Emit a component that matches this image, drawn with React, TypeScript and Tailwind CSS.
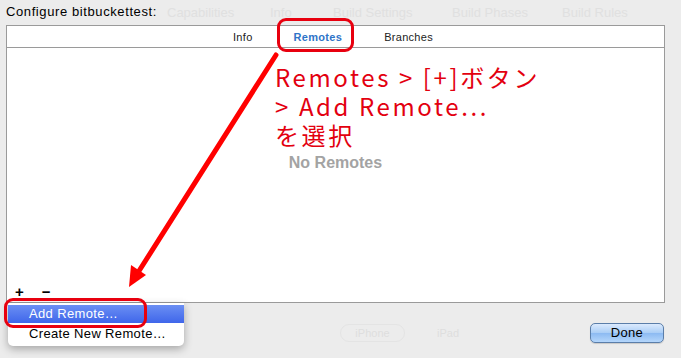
import React from "react";

export default function App() {
  return (
    <div className="relative w-[681px] h-[358px] overflow-hidden bg-[#ececec] font-['Liberation_Sans',Arial,sans-serif] text-black">
      {/* faint background toolbar labels */}
      <div className="absolute left-0 top-[5px] w-full h-[16px] text-[13px] leading-[16px] text-[#e0e0e0]">
        <span className="absolute left-[167px]">Capabilities</span>
        <span className="absolute left-[270px]">Info</span>
        <span className="absolute left-[333px]">Build Settings</span>
        <span className="absolute left-[452px]">Build Phases</span>
        <span className="absolute left-[562px]">Build Rules</span>
      </div>

      <div className="relative flex flex-col">
        <div className="pl-[6px] pt-[4px] text-[13px] leading-[16px] tracking-[0.6px]">Configure bitbuckettest:</div>

        <div className="ml-[6px] mt-[5px] w-[659px] h-[278px] border border-[#9a9a9a] bg-white flex flex-col">
          <div className="h-[22px] border-b border-[#9a9a9a] flex items-center text-[11px] leading-[14px] pl-[226px] tracking-[0.3px]">
            <span className="text-[#222]">Info</span>
            <span className="ml-[41px] font-bold text-[#2f74c8]">Remotes</span>
            <span className="ml-[42px] text-[#222]">Branches</span>
          </div>
          <div className="flex-1 flex flex-col">
            <div className="pt-[105px] text-center text-[16px] leading-[19px] font-bold text-[#a3a3a3]">No Remotes</div>
            <div className="mt-auto mb-[1px] h-[18px] flex items-center pl-[8px] text-[15px] font-bold leading-[18px]">
              <span>+</span>
              <span className="ml-[18px]">−</span>
            </div>
          </div>
        </div>

        <div className="mt-[20px] h-[20px] flex items-center pr-[17px]">
          <div className="ml-[340px] w-[65px] h-[18px] rounded-full border border-[#e4e4e4] text-[11px] leading-[16px] text-center text-[#dedede]">iPhone</div>
          <div className="ml-[32px] text-[11px] text-[#dedede]">iPad</div>
          <div className="ml-auto w-[74px] h-[20px] rounded-[5px] border border-[#5b7ea9] bg-[linear-gradient(#dbeafd,#a9cdf6_50%,#8cbaf2_51%,#b4d6fb)] text-[13px] leading-[18px] text-center tracking-[0.3px] shadow-[0_1px_1px_rgba(0,0,0,0.15)]">
            Done
          </div>
        </div>
      </div>

      {/* popup menu */}
      <div className="absolute left-[8px] top-[303px] w-[176px] h-[43px] bg-white rounded-b-[5px] shadow-[0_3px_8px_rgba(0,0,0,0.3)] text-[13px] leading-[17px] pt-[2px] tracking-[0.35px]">
        <div className="h-[18px] pl-[21px] text-white bg-[linear-gradient(#6b8ff3,#3f66ea)]">Add Remote…</div>
        <div className="h-[18px] pl-[21px] pt-[2px]">Create New Remote…</div>
      </div>

      {/* annotations */}
      <div className="absolute left-[277px] top-[18px] w-[77px] h-[34px] border-[3px] border-[#e8000f] rounded-[9px]" />
      <div className="absolute left-[4px] top-[298px] w-[143px] h-[30px] border-[3px] border-[#e8000f] rounded-[9px]" />

      <svg className="absolute left-0 top-0" width="681" height="358" viewBox="0 0 681 358">
        <line x1="276" y1="55" x2="139" y2="271" stroke="#ff0000" strokeWidth="5" strokeLinecap="round" />
        <polygon points="129,287 146,275 131,265" fill="#ff0000" />
      </svg>

      <div className="absolute left-[275px] top-[62px] text-[24px] leading-[29px] tracking-[2.6px] text-[#e3000f] font-['Noto_Sans_CJK_JP',sans-serif]">
        <div>Remotes &gt; [+]ボタン</div>
        <div>&gt; Add Remote...</div>
        <div>を選択</div>
      </div>
    </div>
  );
}
